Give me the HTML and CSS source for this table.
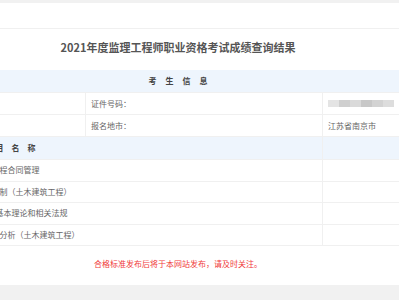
FILE: index.html
```html
<!DOCTYPE html>
<html lang="zh">
<head>
<meta charset="utf-8">
<title>成绩查询结果</title>
<link rel="stylesheet" href="styles.css">
</head>
<body>
<div class="page">
  <div class="topbar"></div>
  <div class="sheet">
    <h1 class="title">2021年度监理工程师职业资格考试成绩查询结果</h1>
    <div class="head-row">考生信息</div>
    <div class="info-row">
      <div class="cell c-a"></div>
      <div class="cell c-b"></div>
      <div class="cell c-c">证件号码：</div>
      <div class="cell c-d"><span class="blur"><i class="b1"></i><i class="b2"></i><i class="b3"></i><i class="b4"></i><i class="b5"></i><i class="b6"></i></span></div>
    </div>
    <div class="info-row">
      <div class="cell c-a"></div>
      <div class="cell c-b"></div>
      <div class="cell c-c">报名地市：</div>
      <div class="cell c-d">江苏省南京市</div>
    </div>
    <div class="sub-head">
      <div class="cell s-name">科目名称</div>
      <div class="cell s-score"></div>
    </div>
    <div class="sub-row">
      <div class="cell s-name">建设工程合同管理</div>
      <div class="cell s-score"></div>
    </div>
    <div class="sub-row">
      <div class="cell s-name">建设工程目标控制（土木建筑工程）</div>
      <div class="cell s-score"></div>
    </div>
    <div class="sub-row">
      <div class="cell s-name">建设工程监理基本理论和相关法规</div>
      <div class="cell s-score"></div>
    </div>
    <div class="sub-row">
      <div class="cell s-name">建设工程监理案例分析（土木建筑工程）</div>
      <div class="cell s-score"></div>
    </div>
    <p class="notice">合格标准发布后将于本网站发布，请及时关注。</p>
  </div>
</div>
</body>
</html>
```

FILE: styles.css
```css
html, body {
  margin: 0;
  padding: 0;
  background: #f1f1f1;
  overflow: hidden;
  font-family: "Noto Sans CJK SC", "Noto Sans", sans-serif;
}
.page {
  margin-top: 3px;
  height: 282px;
  background: #ffffff;
  overflow: hidden;
}
.topbar {
  height: 25px;
  border-bottom: 1px solid #f0f0f0;
}
.sheet {
  width: 970px;
  margin-left: -307px;
}
.title {
  margin: 0;
  height: 41px;
  line-height: 36px;
  text-align: center;
  font-size: 11px;
  font-weight: bold;
  color: #555;
}
.head-row {
  height: 22px;
  line-height: 22px;
  background: #eef5fd;
  text-align: center;
  font-size: 8px;
  font-weight: bold;
  color: #444;
  letter-spacing: 9px;
  text-indent: 9px;
  border-bottom: 1px solid #f0f0f0;
}
.info-row {
  display: grid;
  grid-template-columns: 200px 193px 237px 340px;
  height: 21px;
  border-bottom: 1px solid #f0f0f0;
}
.cell {
  font-size: 8px;
  line-height: 21px;
  color: #666;
  padding-left: 5px;
  border-right: 1px solid #f0f0f0;
  white-space: nowrap;
  overflow: hidden;
}
.blur {
  display: inline-flex;
  vertical-align: middle;
  margin-top: -3px;
}
.blur i {
  display: block;
  width: 11px;
  height: 7px;
}
.blur .b1 { background: #e4e4e4; }
.blur .b2 { background: #cfcfcf; }
.blur .b3 { background: #dadada; }
.blur .b4 { background: #c8c8c8; }
.blur .b5 { background: #d3d3d3; }
.blur .b6 { background: #dddddd; }
.sub-head {
  display: grid;
  grid-template-columns: 630px 340px;
  height: 22px;
  background: #eef5fd;
  border-bottom: 1px solid #f0f0f0;
}
.sub-head .s-name {
  font-weight: bold;
  color: #444;
  letter-spacing: 8px;
  text-indent: 8px;
  line-height: 22px;
}
.sub-row {
  display: grid;
  grid-template-columns: 630px 340px;
  height: 20.5px;
  border-bottom: 1px solid #f0f0f0;
}
.s-name {
  text-align: center;
  padding-left: 0;
  line-height: 20.5px;
}
.notice {
  margin: 0;
  padding-top: 12px;
  text-align: center;
  font-size: 8px;
  line-height: 12px;
  color: #f03a3a;
}
```
